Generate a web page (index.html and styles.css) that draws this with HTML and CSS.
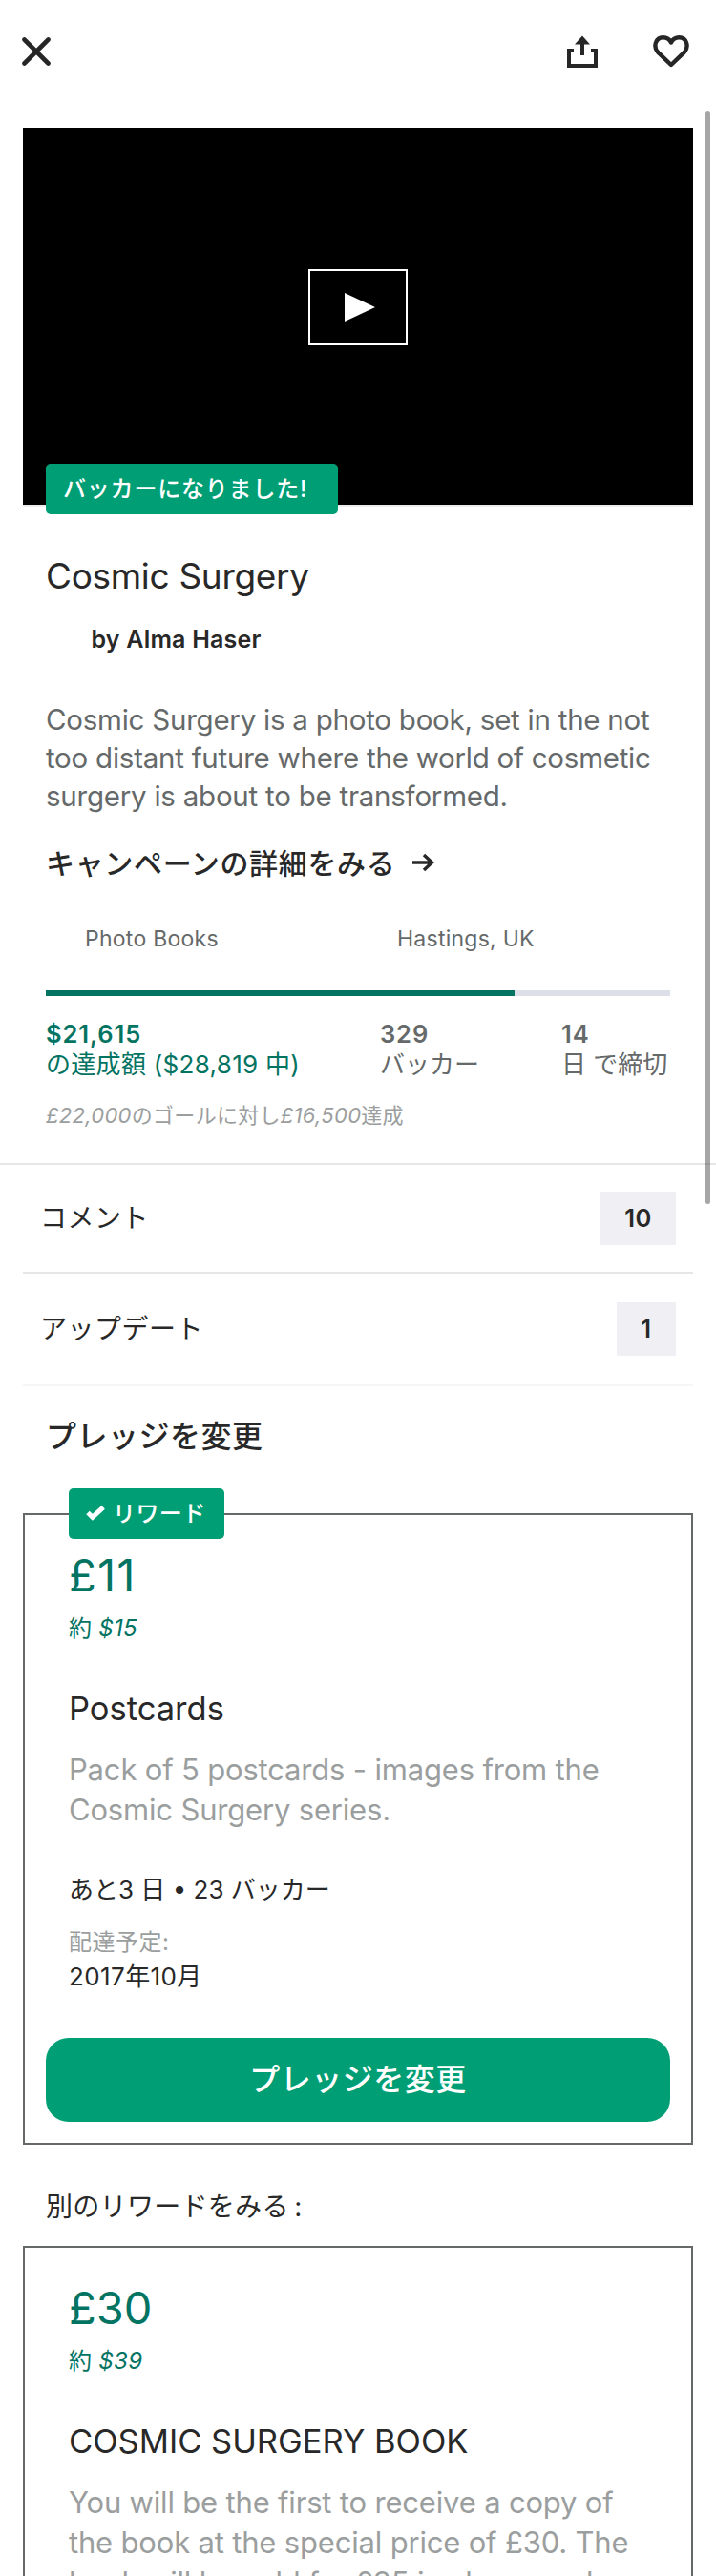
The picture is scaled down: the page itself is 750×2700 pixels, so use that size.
FILE: index.html
```html
<!DOCTYPE html>
<html lang="ja">
<head>
<meta charset="utf-8">
<title>Cosmic Surgery</title>
<link rel="stylesheet" href="styles.css">
</head>
<body>
<header class="nav">
  <svg class="nav-close" width="30" height="30" viewBox="0 0 30 30"><path d="M2.500 2.500 27.500 27.500M27.500 2.500 2.500 27.500"/></svg>
  <svg class="nav-share" width="32" height="34" viewBox="0 0 32 34"><path d="M7 16H2V32H30V16H25M16 21V8"/><path class="solid" d="M16 .5 24 9.500H8Z"/></svg>
  <svg class="nav-heart" width="38" height="34" viewBox="0 0 38 34"><path d="M19 31 5 17.600C-.2 11.500 3 2.200 10.500 2.200 14.500 2.200 17.500 4.200 19 7.500 20.500 4.200 23.500 2.200 27.500 2.200 35 2.200 38.200 11.500 33 17.600Z"/></svg>
</header>
<main>
  <section class="video">
    <div class="play"><svg width="32" height="30" viewBox="0 0 32 30"><path d="M0 0 32 15 0 30Z"/></svg></div>
    <div class="tag tag-backer">バッカーになりました!</div>
  </section>
  <section class="project">
    <h1 class="title">Cosmic Surgery</h1>
    <p class="creator">by Alma Haser</p>
    <p class="blurb">Cosmic Surgery is a photo book, set in the not<br>too distant future where the world of cosmetic<br>surgery is about to be transformed.</p>
    <a class="more"><span class="more-text">キャンペーンの詳細をみる</span><svg width="24" height="20" viewBox="0 0 24 20"><path d="M1 10H21M13 2 21.500 10 13 18"/></svg></a>
    <div class="meta"><span class="category">Photo Books</span><span class="place">Hastings, UK</span></div>
    <div class="bar"><div class="bar-fill" style="width:75%"></div></div>
    <div class="stats">
      <div class="stat pledged"><b>$21,615</b><span>の達成額 ($28,819 中)</span></div>
      <div class="stat backers"><b>329</b><span>バッカー</span></div>
      <div class="stat days"><b>14</b><span>日 で締切</span></div>
    </div>
    <p class="goal"><i>£22,000</i>のゴールに対し<i>£16,500</i>達成</p>
  </section>
  <section class="links">
    <div class="link comments"><span>コメント</span><b class="count">10</b></div>
    <div class="link updates"><span>アップデート</span><b class="count count-narrow">1</b></div>
  </section>
  <h2 class="heading">プレッジを変更</h2>
  <article class="card card-current">
    <div class="tag tag-reward"><svg width="20" height="16" viewBox="0 0 20 16"><path d="M2 7.500 6.900 12.200 18.200 1.800"/></svg><span>リワード</span></div>
    <div class="price">£11</div>
    <div class="approx">約 <i>$15</i></div>
    <h3 class="reward-title">Postcards</h3>
    <p class="reward-text">Pack of 5 postcards - images from the<br>Cosmic Surgery series.</p>
    <p class="remaining">あと3 日 • 23 バッカー</p>
    <p class="delivery-label">配達予定:</p>
    <p class="delivery">2017年10月</p>
    <button class="button">プレッジを変更</button>
  </article>
  <p class="others">別のリワードをみる<span class="colon">:</span></p>
  <article class="card card-next">
    <div class="price">£30</div>
    <div class="approx">約 <i>$39</i></div>
    <h3 class="reward-title">COSMIC SURGERY BOOK</h3>
    <p class="reward-text">You will be the first to receive a copy of<br>the book at the special price of £30. The<br>book will be sold for £35 in shops and</p>
  </article>
</main>
<div class="scrollbar"></div>
</body>
</html>
```
FILE: styles.css
```css
* { box-sizing: border-box; margin: 0; padding: 0; }
html, body { height: 2700px; overflow: hidden; }
body {
  position: relative; width: 750px; background: #fff; color: #282828;
  font-family: Inter, "Noto Sans CJK JP", sans-serif; font-size: 26px;
}
svg { display: block; fill: none; flex: none; }
h1, h2, h3 { font-weight: 400; }
h1, h2, h3, p, a, span, b, .price, .approx, .tag { white-space: nowrap; }
.nav { height: 134px; padding: 37px 28px 0 23px; display: flex; align-items: flex-start; }
.nav svg { stroke: #262626; stroke-width: 4; stroke-linejoin: miter; }
.nav .solid { fill: #262626; stroke: none; }
.nav .nav-close { margin-top: 2px; stroke-width: 4.6; stroke-linecap: round; }
.nav-share { margin-left: auto; }
.nav .nav-heart { margin-left: 58px; stroke-width: 4.4; stroke-linejoin: round; }
.video {
  position: relative; height: 397px; margin: 0 24px; background: #000;
  border-bottom: 2px solid #ececec; padding-top: 148px;
}
.play {
  width: 104px; height: 80px; margin: 0 auto; border: 2px solid #fff;
  display: flex; align-items: center; justify-content: center; padding-left: 4px;
}
.play svg { fill: #fff; }
.tag {
  position: absolute; height: 53px; border-radius: 5px; background: #009e74; color: #fff;
  font-size: 24px; font-weight: 500; line-height: 53px;
}
.tag-backer { left: 24px; top: 352px; width: 306px; padding-left: 18px; letter-spacing: .8px; }
.project { padding: 0 48px; height: 688px; display: flex; flex-direction: column; }
.title { margin-top: 48px; font-size: 37px; line-height: 50px; letter-spacing: -.32px; }
.creator { margin: 23px 0 0 47.5px; font-size: 25px; font-weight: 600; line-height: 36px; letter-spacing: .2px; }
.blurb { margin-top: 46px; font-size: 29.5px; line-height: 40px; letter-spacing: -.24px; color: #656969; }
.more { margin-top: 31px; height: 40px; display: flex; align-items: center; gap: 17px; font-size: 30px; font-weight: 500; line-height: 40px; letter-spacing: .66px; }
.more-text { width: 366px; }
.more svg { stroke: #282828; stroke-width: 3.4; margin-bottom: 2px; }
.meta { margin-top: 44px; height: 30px; display: flex; font-size: 23px; line-height: 30px; letter-spacing: .25px; color: #656969; }
.category { margin-left: 41px; width: 327px; }
.bar { margin-top: 39px; height: 6px; background: #dcdee8; }
.bar-fill { height: 6px; background: #037362; }
.stats { margin-top: 24px; height: 66px; display: grid; grid-template-columns: 350px 190px 1fr; color: #656969; }
.stat { display: flex; flex-direction: column; line-height: 32px; }
.stat b { font-size: 25.5px; font-weight: 600; letter-spacing: .9px; }
.stat span { font-size: 26px; }
.pledged { color: #037362; }
.pledged span { letter-spacing: .3px; }
.goal { margin-top: 17px; font-size: 22px; line-height: 36px; letter-spacing: .3px; color: #9b9e9e; }
.links { border-top: 2px solid #e6e6e6; }
.link { margin: 0 24px; padding: 0 18px; display: flex; justify-content: space-between; align-items: center; font-size: 28px; line-height: 40px; letter-spacing: .5px; }
.comments { height: 114px; border-bottom: 2px solid #e6e6e6; }
.updates { height: 118px; border-bottom: 2px solid #f6f6f6; }
.count { width: 79px; height: 56px; background: #efeff4; font-size: 25.5px; font-weight: 600; line-height: 56px; text-align: center; }
.count-narrow { width: 62px; }
.heading { height: 133px; padding: 31px 0 0 48px; font-size: 32px; font-weight: 500; line-height: 44px; letter-spacing: .5px; }
.card { position: relative; margin: 0 24px; border: 2px solid #656969; padding: 33px 22px 0 46px; }
.card-current { height: 662px; }
.card-next { height: 400px; }
.tag-reward { left: 46px; top: -28px; width: 163px; padding-left: 18px; display: flex; align-items: center; gap: 8px; letter-spacing: .43px; }
.tag-reward svg { stroke: #fff; stroke-width: 5; margin-bottom: 2px; }
.price { height: 60px; font-size: 47px; line-height: 60px; color: #037362; }
.card-current .price { letter-spacing: 1.2px; }
.approx { margin-top: 8px; height: 36px; font-size: 24px; line-height: 36px; letter-spacing: .3px; color: #037362; }
.reward-title { margin-top: 42px; height: 48px; font-size: 34.5px; line-height: 48px; letter-spacing: 0; }
.reward-text { margin-top: 19px; font-size: 31px; line-height: 42px; letter-spacing: -.18px; color: #9b9e9e; }
.remaining { margin-top: 45px; font-size: 26px; line-height: 36px; }
.delivery-label { margin-top: 19px; font-size: 24px; line-height: 36px; letter-spacing: .5px; color: #9b9e9e; }
.delivery { font-size: 26px; line-height: 36px; letter-spacing: .4px; }
.button {
  display: block; margin: 46px 0 0 -24px; width: 654px; height: 88px; border: 0; border-radius: 24px;
  background: #009e74; color: #fff; font: 500 32px/88px Inter, "Noto Sans CJK JP", sans-serif; letter-spacing: .5px;
}
.others { height: 106px; padding: 45px 0 0 48px; font-size: 28px; line-height: 40px; letter-spacing: .3px; }
.colon { margin-left: 5.5px; }
.scrollbar { position: absolute; left: 739px; top: 116px; width: 5px; height: 1146px; border-radius: 3px; background: rgba(0,0,0,.35); }
```
